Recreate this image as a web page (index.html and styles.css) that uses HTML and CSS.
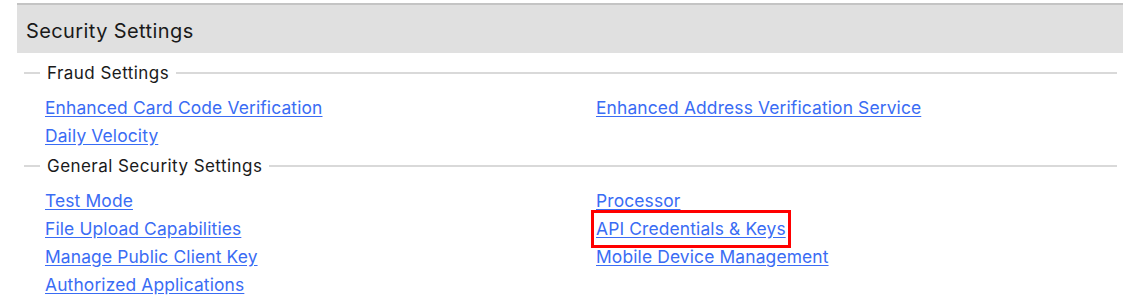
FILE: index.html
```html
<!DOCTYPE html>
<html lang="en">
<head>
  <meta charset="UTF-8">
  <title>Security Settings</title>
  <link rel="stylesheet" href="styles.css">
</head>
<body>

<div class="panel">
  <div class="panel-head">Security Settings</div>

  <fieldset class="group first">
    <legend>Fraud Settings</legend>
    <div class="links">
      <div class="col">
        <a href="#">Enhanced Card Code Verification</a>
        <a href="#">Daily Velocity</a>
      </div>
      <div class="col">
        <a href="#">Enhanced Address Verification Service</a>
      </div>
    </div>
  </fieldset>

  <fieldset class="group">
    <legend>General Security Settings</legend>
    <div class="links">
      <div class="col">
        <a href="#">Test Mode</a>
        <a href="#">File Upload Capabilities</a>
        <a href="#">Manage Public Client Key</a>
        <a href="#">Authorized Applications</a>
      </div>
      <div class="col">
        <a href="#">Processor</a>
        <a href="#" class="marked">API Credentials &amp; Keys</a>
        <a href="#">Mobile Device Management</a>
      </div>
    </div>
  </fieldset>
</div>

</body>
</html>
```

FILE: styles.css
```css
body { margin: 0; background: #fff; font-family: Inter, "Open Sans", sans-serif; color: #1a1a1a; }
.panel { margin: 3px 14px 0 17px; }
.panel-head { background: #e0e0e0; border-top: 2px solid #c4c4c4; height: 48px; padding-left: 9px; font-size: 20px; letter-spacing: 0.4px; line-height: 53px; }
.group { border: none; border-top: 2px solid #d9d9d9; margin: 6px 6px 0 7px; padding: 0 0 0 21px; }
.group.first { margin-top: 10px; }
.group legend { padding: 0 7px; margin-left: -5px; font-size: 17px; letter-spacing: 0.45px; line-height: 20px; }
.links { display: grid; grid-template-columns: 551px 1fr; margin-top: 11px; }
.col { display: flex; flex-direction: column; align-items: flex-start; }
.col a { color: #3a6cf4; font-size: 17.4px; letter-spacing: 0.14px; line-height: 28px; text-decoration: underline; text-underline-offset: 2px; }
.marked { outline: 3px solid #f00; outline-offset: 2px; }
```
